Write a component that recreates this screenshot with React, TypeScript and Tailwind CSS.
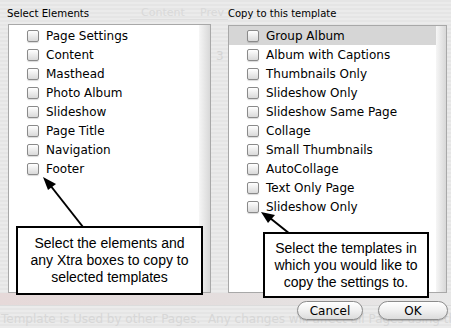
import React from 'react';

const ELEMENTS = ['Page Settings', 'Content', 'Masthead', 'Photo Album', 'Slideshow', 'Page Title', 'Navigation', 'Footer'];
const TEMPLATES = [
  'Group Album',
  'Album with Captions',
  'Thumbnails Only',
  'Slideshow Only',
  'Slideshow Same Page',
  'Collage',
  'Small Thumbnails',
  'AutoCollage',
  'Text Only Page',
  'Slideshow Only',
];

const Check = () => (
  <span className="w-[12px] h-[12px] shrink-0 rounded-[2px] border border-[#8a8a8a] bg-gradient-to-b from-[#ffffff] to-[#d9d9d9] shadow-[0_1px_1px_rgba(0,0,0,0.15)]" />
);

const Row = ({ label, selected, indent }: { label: string; selected?: boolean; indent: string }) => (
  <div className={`flex items-center h-[19px] gap-[7px] ${indent} ${selected ? 'bg-[#d6d6d6]' : ''}`}>
    <Check />
    <span className="text-[12px] text-black leading-none">{label}</span>
  </div>
);

const Callout = ({ lines, className }: { lines: string[]; className: string }) => (
  <div
    className={`absolute bg-white border-2 border-black flex flex-col items-center justify-center text-[14px] leading-[17px] text-black whitespace-nowrap ${className}`}
    style={{ fontFamily: '"Liberation Sans", Arial, sans-serif' }}
  >
    {lines.map((l) => (
      <span key={l}>{l}</span>
    ))}
  </div>
);

export default function App() {
  return (
    <div
      className="relative w-[451px] h-[328px] overflow-hidden bg-[repeating-linear-gradient(0deg,#ebebeb_0px,#ebebeb_2px,#e5e5e5_2px,#e5e5e5_4px)]"
      style={{ fontFamily: '"DejaVu Sans", Verdana, sans-serif' }}
    >
      {/* faded content behind the sheet */}
      <div className="absolute left-[130px] top-[2px] w-[98px] h-[18px] border-b border-[#dedede]" />
      <span className="absolute left-[141px] top-[5px] text-[11px] text-[#d9d9d9]">Content</span>
      <span className="absolute left-[200px] top-[5px] text-[11px] text-[#d9d9d9]">Prev</span>
      <span className="absolute left-[216px] top-[47px] text-[12px] text-[#d4d4d4]">3</span>

      <div className="flex pl-[8px] gap-[17px]">
        {/* left column */}
        <div className="w-[203px] flex flex-col">
          <div className="h-[24px] pt-[6px] -ml-[1px] text-[10.2px] text-black relative">Select Elements</div>
          <div className="h-[269px] bg-white border border-[#a8a8a8] flex">
            <div className="flex-1 pt-[1px]">
              {ELEMENTS.map((e) => (
                <Row key={e} label={e} indent="pl-[18px]" />
              ))}
            </div>
            <div className="w-[11px] bg-gradient-to-r from-[#f6f6f6] to-[#d8d8d8]" />
          </div>
        </div>

        {/* right column */}
        <div className="w-[219px] flex flex-col">
          <div className="h-[25px] pt-[6px] text-[10px] text-black relative">Copy to this template</div>
          <div className="h-[268px] bg-white border border-[#a8a8a8] flex">
            <div className="flex-1">
              {TEMPLATES.map((t, i) => (
                <Row key={i} label={t} selected={i === 0} indent="pl-[18px]" />
              ))}
            </div>
            <div className="w-[10px] bg-gradient-to-r from-[#f6f6f6] to-[#d8d8d8]" />
          </div>
        </div>
      </div>

      {/* faded strip and status line */}
      <div className="h-[12px] bg-gradient-to-r from-[#e6d9d9] via-[#e4dede] to-[#e8e8e8]" />
      <div className="border-t border-[#dcdcdc] h-[23px] pl-[1px] pt-[4px] text-[12px] text-[#d7d7d7] whitespace-nowrap">
        Template is Used by other Pages.&nbsp; Any changes will affect all Pages using this Template.
      </div>

      {/* buttons */}
      <div className="absolute left-[297px] top-[301px] flex gap-[15px]">
        <button className="w-[66px] h-[19px] rounded-full border border-[#8c8c8c] bg-gradient-to-b from-[#ffffff] via-[#f0f0f0] to-[#dcdcdc] text-[12px] leading-none text-black shadow-[0_1px_1px_rgba(0,0,0,0.2)]">
          Cancel
        </button>
        <button className="w-[70px] h-[19px] rounded-full border border-[#8c8c8c] bg-gradient-to-b from-[#ffffff] via-[#f0f0f0] to-[#dcdcdc] text-[12px] leading-none text-black shadow-[0_1px_1px_rgba(0,0,0,0.2)]">
          OK
        </button>
      </div>

      {/* annotations */}
      <svg className="absolute left-0 top-0" width="451" height="328">
        <line x1="83" y1="227" x2="50" y2="185" stroke="black" strokeWidth="2" />
        <polygon points="43,177 56,184 48,190" fill="black" />
        <line x1="290" y1="234" x2="270" y2="218" stroke="black" strokeWidth="2" />
        <polygon points="261,212 275,215 268,223" fill="black" />
      </svg>

      <Callout
        className="left-[16px] top-[226px] w-[187px] h-[69px]"
        lines={['Select the elements and', 'any Xtra boxes to copy to', 'selected templates']}
      />
      <Callout
        className="left-[263px] top-[232px] w-[166px] h-[66px]"
        lines={['Select the templates in', 'which you would like to', 'copy the settings to.']}
      />
    </div>
  );
}
